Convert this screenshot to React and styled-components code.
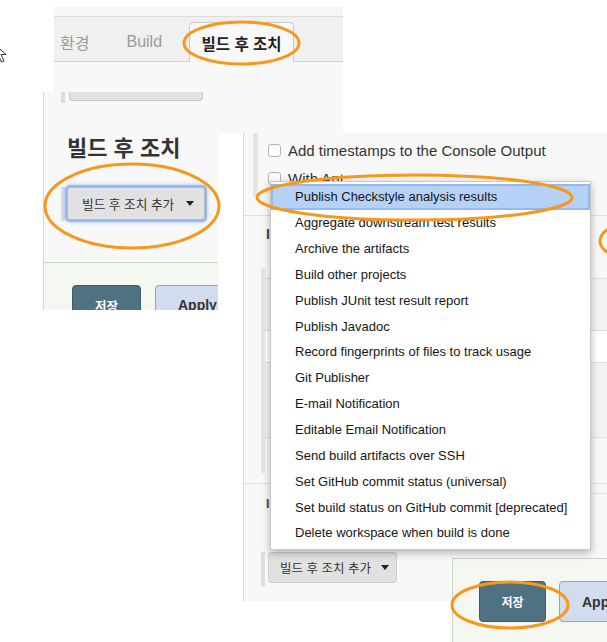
import React from 'react';
import styled, { createGlobalStyle } from 'styled-components';

const FONT = `"Liberation Sans", "Noto Sans CJK KR", Arial, sans-serif`;

const Global = createGlobalStyle`
  html, body { margin: 0; padding: 0; background: #fff; }
  body { width: 607px; height: 642px; overflow: hidden; font-family: ${FONT}; }
  * { box-sizing: border-box; }
`;

const Stage = styled.div`
  position: relative;
  width: 607px;
  height: 642px;
  overflow: hidden;
  background: #fff;
`;

/* A cropped screenshot fragment placed on the collage canvas */
const Shot = styled.div`
  position: absolute;
  left: ${(p) => p.$x}px;
  top: ${(p) => p.$y}px;
  width: ${(p) => p.$w}px;
  height: ${(p) => p.$h}px;
  overflow: hidden;
  display: flex;
  flex-direction: ${(p) => p.$dir || 'column'};
  background: ${(p) => p.$bg || '#f8f8f8'};
  border-left: ${(p) => (p.$edge ? '1px solid #d6d6d6' : 'none')};
`;

/* ---------- tabs fragment ---------- */
const TopStrip = styled.div`
  height: 10px;
  background: #f6f7f3;
  border-bottom: 1px solid #dcdcdc;
`;

const TabBar = styled.div`
  height: 45px;
  background: #f0f0f0;
  border-bottom: 1px solid #d0d0d0;
  display: flex;
  align-items: flex-end;
  padding-left: 6px;
`;

const Tab = styled.div`
  height: 39px;
  display: flex;
  align-items: center;
  font-size: 16px;
  color: #9a9a9a;
  margin-right: ${(p) => p.$gap}px;
  white-space: nowrap;
`;

const ActiveTab = styled.div`
  height: 40px;
  width: 105px;
  margin-bottom: -1px;
  display: flex;
  align-items: center;
  justify-content: center;
  background: #f8f8f8;
  border: 1px solid #c9c9c9;
  border-bottom: none;
  border-radius: 5px 5px 0 0;
  font-size: 15.5px;
  font-weight: 700;
  color: #222;
  white-space: nowrap;
`;

const Fill = styled.div`
  flex: 1;
  background: #f8f8f8;
`;

/* ---------- shared bits ---------- */
const VBar = styled.div`
  width: ${(p) => p.$w || 4}px;
  height: ${(p) => p.$h}px;
  background: ${(p) => p.$c || '#dedede'};
  flex-shrink: 0;
`;

const Divider = styled.div`
  height: 1px;
  background: #e0e0e0;
  margin: ${(p) => p.$m || '0'};
`;

const Caret = styled.span`
  width: 0;
  height: 0;
  border-left: 4px solid transparent;
  border-right: 4px solid transparent;
  border-top: 5px solid #222;
  margin-left: ${(p) => p.$ml}px;
`;

const AddButton = styled.div`
  display: flex;
  align-items: center;
  width: ${(p) => p.$w}px;
  height: ${(p) => p.$h}px;
  margin-left: ${(p) => p.$ml}px;
  padding-left: ${(p) => p.$pl}px;
  background: #e1e1e1;
  border: 1px solid ${(p) => (p.$focus ? '#b9b9b9' : '#cdcdcd')};
  border-radius: 3px;
  font-size: ${(p) => p.$fs}px;
  color: #333;
  white-space: nowrap;
  box-shadow: ${(p) => (p.$focus ? '0 0 0 2px #93b8f2, 0 0 4px 2px rgba(120,165,240,0.6)' : 'none')};
`;

const Row = styled.div`
  display: flex;
  align-items: ${(p) => p.$align || 'flex-start'};
  margin: ${(p) => p.$m || '0'};
`;

/* ---------- left fragment ---------- */
const ButtonStub = styled.div`
  width: 134px;
  height: 9px;
  margin-left: 4px;
  background: #e2e2e2;
  border: 1px solid #c9c9c9;
  border-top: none;
  border-radius: 0 0 4px 4px;
`;

const Heading = styled.h2`
  margin: 7px 0 0 23px;
  font-size: 22px;
  line-height: 30px;
  font-weight: 700;
  color: #333;
  white-space: nowrap;
`;

const Footer = styled.div`
  display: flex;
  align-items: flex-start;
  background: #f4f8f1;
  border-top: 1px solid #c6d7c6;
  border-left: ${(p) => (p.$edge ? '1px solid #c6d7c6' : 'none')};
  padding: ${(p) => p.$pad};
  flex: 1;
  margin-top: ${(p) => p.$mt || 0}px;
`;

const SaveButton = styled.div`
  width: ${(p) => p.$w}px;
  height: ${(p) => p.$h}px;
  flex-shrink: 0;
  display: flex;
  align-items: center;
  justify-content: center;
  background: #4e7282;
  border: 1px solid #3d5b69;
  border-radius: 4px;
  color: #fff;
  font-size: ${(p) => p.$fs}px;
  font-weight: 700;
`;

const ApplyButton = styled.div`
  width: 90px;
  height: ${(p) => p.$h}px;
  flex-shrink: 0;
  margin-left: ${(p) => p.$ml}px;
  padding-left: 22px;
  display: flex;
  align-items: center;
  background: #d1ddee;
  border: 1px solid #86a5d0;
  border-radius: 4px;
  color: #333;
  font-size: 14px;
  font-weight: 700;
`;

/* ---------- right fragment ---------- */
const GrayPanel = styled.div`
  flex: 1;
  margin-left: 25px;
  background: #f8f8f8;
  border-left: 1px solid #d6d6d6;
  display: flex;
  flex-direction: column;
`;

const SectionA = styled.div`
  height: 83px;
  border-bottom: 1px solid #e0e0e0;
  display: flex;
  padding-left: 9px;
`;

const Options = styled.div`
  display: flex;
  flex-direction: column;
  gap: 9px;
  padding: 8px 0 0 10px;
`;

const Option = styled.label`
  display: flex;
  align-items: center;
  height: 19px;
  font-size: 15px;
  color: #333;
  white-space: nowrap;
`;

const Check = styled.span`
  width: 13px;
  height: 13px;
  background: #fff;
  border: 1px solid #b4b4b4;
  border-radius: 3px;
  margin-right: 7px;
`;

const SectionB = styled.div`
  height: 268px;
  border-bottom: 1px solid #e0e0e0;
  display: flex;
  flex-direction: column;
`;

const Label = styled.div`
  margin: ${(p) => p.$m};
  font-size: ${(p) => p.$fs}px;
  font-weight: 700;
  color: #444;
  line-height: 16px;
  white-space: nowrap;
`;

const Nested = styled.div`
  margin: 26px 0 0 17px;
  height: 205px;
  border-left: 4px solid #e6e6e6;
  display: flex;
  flex-direction: column;
`;

const NestedRow = styled.div`
  height: ${(p) => p.$h}px;
  background: ${(p) => p.$bg || 'transparent'};
  border-bottom: ${(p) => (p.$line ? '1px solid #dedede' : 'none')};
  display: flex;
  align-items: center;
  font-size: 15px;
  color: #333;
  white-space: nowrap;
  padding-left: ${(p) => p.$pl || 0}px;
`;

const SectionC = styled.div`
  flex: 1;
  display: flex;
  flex-direction: column;
`;

/* ---------- dropdown menu (overlay) ---------- */
const Menu = styled.ul`
  position: absolute;
  left: 270px;
  top: 181px;
  width: 321px;
  height: 369px;
  margin: 0;
  padding: 2px 0 0;
  list-style: none;
  background: #fff;
  border: 1px solid #c6c6c6;
  box-shadow: 0 3px 8px rgba(0, 0, 0, 0.28);
`;

const MenuItem = styled.li`
  height: 25.85px;
  display: flex;
  align-items: center;
  padding-left: 24px;
  font-size: 13px;
  color: #161616;
  white-space: nowrap;
  background: ${(p) => (p.$active ? '#b5d1f6' : 'transparent')};
  box-shadow: ${(p) => (p.$active ? 'inset 0 0 0 2px #92b9f1' : 'none')};
`;

const Overlay = styled.svg`
  position: absolute;
  left: 0;
  top: 0;
  pointer-events: none;
`;

const Cursor = styled.svg`
  position: absolute;
  left: -6px;
  top: 44px;
`;

const items = [
  'Publish Checkstyle analysis results',
  'Aggregate downstream test results',
  'Archive the artifacts',
  'Build other projects',
  'Publish JUnit test result report',
  'Publish Javadoc',
  'Record fingerprints of files to track usage',
  'Git Publisher',
  'E-mail Notification',
  'Editable Email Notification',
  'Send build artifacts over SSH',
  'Set GitHub commit status (universal)',
  'Set build status on GitHub commit [deprecated]',
  'Delete workspace when build is done',
];

const ellipses = [
  { cx: 241.5, cy: 43, rx: 57.5, ry: 21 },
  { cx: 132, cy: 206, rx: 87, ry: 42 },
  { cx: 414.5, cy: 197.5, rx: 157.5, ry: 22.5 },
  { cx: 642, cy: 241, rx: 42, ry: 20 },
  { cx: 510, cy: 605, rx: 58, ry: 23 },
];

export default function App() {
  return (
    <Stage>
      <Global />

      {/* tab strip fragment */}
      <Shot $x={54} $y={7} $w={289} $h={85}>
        <TopStrip />
        <TabBar>
          <Tab $gap={37}>환경</Tab>
          <Tab $gap={27}>Build</Tab>
          <ActiveTab>빌드 후 조치</ActiveTab>
        </TabBar>
        <Fill />
      </Shot>

      {/* left fragment */}
      <Shot $x={43} $y={92} $w={300} $h={218} $edge>
        <Row $m="0 0 0 17px">
          <VBar $h={11} />
          <ButtonStub />
        </Row>
        <Divider $m="24px 0 0 6px" />
        <Heading>빌드 후 조치</Heading>
        <Row $m="23px 0 0 17px">
          <VBar $h={34} />
          <AddButton $focus $w={138} $h={33} $ml={2} $pl={14} $fs={12.7}>
            빌드 후 조치 추가
            <Caret $ml={12} />
          </AddButton>
        </Row>
        <Footer $mt={41} $pad="22px 0 0 28px">
          <SaveButton $w={69} $h={40} $fs={12.5}>저장</SaveButton>
          <ApplyButton $ml={14} $h={40}>Apply</ApplyButton>
        </Footer>
      </Shot>

      {/* right fragment */}
      <Shot $x={218} $y={133} $w={389} $h={468} $dir="row" $bg="#fff">
        <GrayPanel>
          <SectionA>
            <VBar $w={5} $h={63} $c="#e4e4e4" />
            <Options>
              <Option>
                <Check />
                Add timestamps to the Console Output
              </Option>
              <Option>
                <Check />
                With Ant
              </Option>
            </Options>
          </SectionA>
          <SectionB>
            <Label $m="10px 0 0 22px" $fs={14}>Include</Label>
            <Nested>
              <NestedRow $h={11} $line />
              <NestedRow $h={52} $bg="#f3f3f3" $line />
              <NestedRow $h={32} $bg="#fff" $line $pl={346}>
                e include
              </NestedRow>
              <NestedRow $h={75} $bg="#f3f3f3" $line />
            </Nested>
          </SectionB>
          <SectionC>
            <Divider $m="9px 0 0 60px" />
            <Label $m="2px 0 0 22px" $fs={12}>Include</Label>
            <Row $m="40px 0 0 17px">
              <VBar $h={34} />
              <AddButton $w={129} $h={31} $ml={3} $pl={11} $fs={12.5}>
                빌드 후 조치 추가
                <Caret $ml={10} />
              </AddButton>
            </Row>
          </SectionC>
        </GrayPanel>
      </Shot>

      {/* bottom-right footer fragment */}
      <Shot $x={452} $y={558} $w={155} $h={84} $bg="#f4f8f1">
        <Footer $edge $pad="22px 0 0 26px">
          <SaveButton $w={67} $h={41} $fs={12}>저장</SaveButton>
          <ApplyButton $ml={13} $h={41}>Apply</ApplyButton>
        </Footer>
      </Shot>

      {/* open dropdown menu */}
      <Menu>
        {items.map((t, i) => (
          <MenuItem key={t} $active={i === 0}>
            {t}
          </MenuItem>
        ))}
      </Menu>

      {/* orange highlight annotations */}
      <Overlay width="607" height="642" viewBox="0 0 607 642">
        {ellipses.map((e, i) => (
          <ellipse
            key={i}
            cx={e.cx}
            cy={e.cy}
            rx={e.rx}
            ry={e.ry}
            fill="none"
            stroke="#f7981d"
            strokeWidth="3"
          />
        ))}
      </Overlay>

      {/* mouse pointer tail at left edge */}
      <Cursor width="16" height="20" viewBox="0 0 16 20">
        <path
          d="M1 1 L1 15 L4.5 11.5 L7.5 18 L10 17 L7 10.5 L12 10.5 Z"
          fill="#fff"
          stroke="#333"
          strokeWidth="1"
          strokeLinejoin="round"
        />
      </Cursor>
    </Stage>
  );
}
